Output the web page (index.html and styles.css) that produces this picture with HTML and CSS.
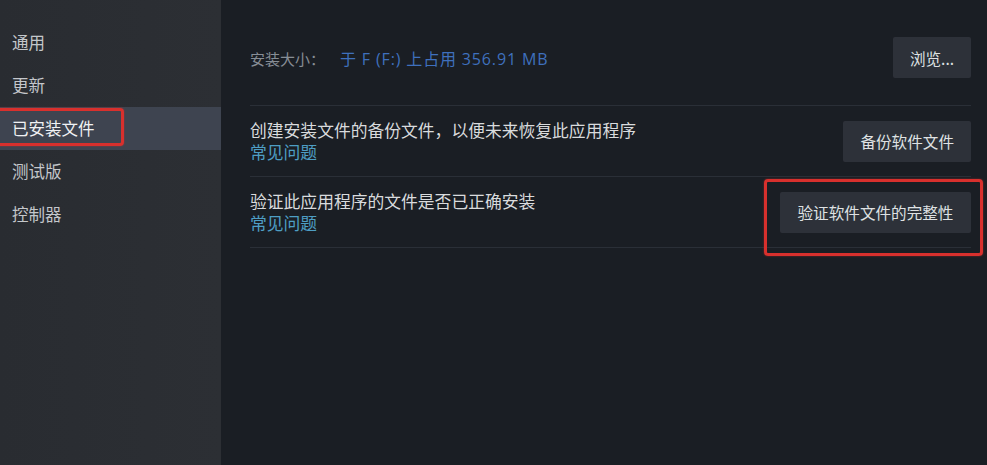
FILE: index.html
```
<!DOCTYPE html>
<html lang="zh-CN">
<head>
<meta charset="utf-8">
<title>已安装文件</title>
<link rel="stylesheet" href="styles.css">
</head>
<body>
<div class="app">
  <nav class="sidebar">
    <div class="nav-item">通用</div>
    <div class="nav-item">更新</div>
    <div class="nav-item active">已安装文件<span class="mark mark-nav"></span></div>
    <div class="nav-item">测试版</div>
    <div class="nav-item">控制器</div>
  </nav>
  <main class="content">
    <section class="row row-size">
      <div class="size-text"><span class="label">安装大小：</span><span class="value">于 F (F:) 上占用 356.91 MB</span></div>
      <button class="btn">浏览...</button>
    </section>
    <section class="row">
      <div class="desc">
        <div class="desc-title">创建安装文件的备份文件，以便未来恢复此应用程序</div>
        <a class="link">常见问题</a>
      </div>
      <button class="btn">备份软件文件</button>
    </section>
    <section class="row">
      <div class="desc">
        <div class="desc-title">验证此应用程序的文件是否已正确安装</div>
        <a class="link">常见问题</a>
      </div>
      <div class="btn-wrap">
        <button class="btn btn-wide">验证软件文件的完整性</button>
        <span class="mark mark-btn"></span>
      </div>
    </section>
  </main>
</div>
</body>
</html>
```
FILE: styles.css
```
* { box-sizing: border-box; }
html, body { margin: 0; padding: 0; }
body {
  width: 987px;
  height: 465px;
  overflow: hidden;
  background: #1a1e24;
  font-family: "Noto Sans CJK SC", "Noto Sans", sans-serif;
}
.app {
  display: flex;
  height: 465px;
}
.sidebar {
  width: 221px;
  flex: none;
  background: linear-gradient(90deg, #292c31 0%, #2c2f34 100%);
  padding-top: 21px;
}
.nav-item {
  position: relative;
  height: 43px;
  line-height: 43px;
  padding-left: 12px;
  font-size: 16.5px;
  color: #c4c7cb;
}
.nav-item.active {
  background: #3e4450;
  color: #f0f2f4;
}
.mark {
  position: absolute;
  border: 3px solid #d8302d;
  border-radius: 4px;
  box-shadow: 0 0 2px rgba(216, 48, 45, 0.6);
  pointer-events: none;
}
.mark-nav {
  left: -6px;
  top: 1px;
  width: 130px;
  height: 38px;
}
.content {
  flex: 1;
  padding: 37px 16px 0 29px;
}
.row {
  display: flex;
  align-items: center;
  justify-content: space-between;
  padding: 13px 0;
  border-bottom: 1px solid #2a2f37;
}
.row-size {
  padding: 0 0 27px 0;
}
.size-text {
  font-size: 15px;
}
.label {
  color: #878d95;
  margin-right: 15px;
}
.value {
  color: #3f70bd;
  font-family: "Open Sans", "Noto Sans CJK SC", sans-serif;
  font-size: 16px;
  letter-spacing: 0.85px;
}
.desc {
  display: flex;
  flex-direction: column;
}
.desc-title {
  font-size: 16.8px;
  line-height: 22px;
  color: #d9dbdd;
}
.link {
  font-size: 16.8px;
  line-height: 22px;
  color: #4e9ec4;
}
.btn {
  font-family: "Noto Sans CJK SC", "Noto Sans", sans-serif;
  font-size: 15.6px;
  color: #dfe1e3;
  background: #2d3139;
  border: none;
  border-radius: 2px;
  height: 41px;
  padding: 0 17px;
}
.row-size .btn { width: 78px; padding: 0; }
.btn-wrap {
  position: relative;
}
.btn-wide {
  width: 191px;
  padding: 0;
}
.mark-btn {
  left: -16px;
  top: -13px;
  right: -12px;
  bottom: -23px;
}
```
